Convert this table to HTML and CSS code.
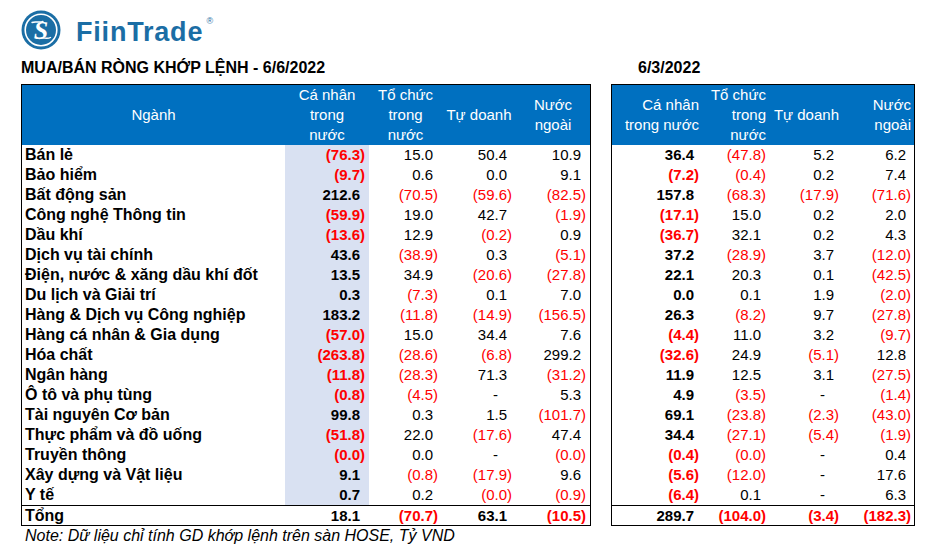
FILE: index.html
```html
<!DOCTYPE html>
<html lang="vi">
<head>
<meta charset="utf-8">
<title>FiinTrade - Mua/bán ròng khớp lệnh</title>
<link rel="stylesheet" href="styles.css">
</head>
<body>
<div class="page">
  <header class="brand">
    <svg class="logo" viewBox="0 0 40 40" aria-hidden="true">
      <circle cx="20" cy="20" r="19.5" fill="#1b6ea5"/>
      <circle cx="20" cy="20" r="15.8" fill="none" stroke="#fff" stroke-width="1.6"/>
      <text x="20" y="29" text-anchor="middle" class="logo-s">S</text>
      <path d="M11 12.5 C14 11 18 13 22 11.5" fill="none" stroke="#fff" stroke-width="1.4" stroke-linecap="round"/>
      <path d="M18 28.5 C22 27 26 29.5 29.5 27.5" fill="none" stroke="#fff" stroke-width="1.4" stroke-linecap="round"/>
    </svg>
    <span class="brand-name">FiinTrade<span class="reg">®</span></span>
  </header>

  <div class="tables">
    <section class="panel panel-left">
      <h1 class="title">MUA/BÁN RÒNG KHỚP LỆNH - 6/6/2022</h1>
      <table class="grid grid-left">
        <colgroup>
          <col class="c-name"><col class="c-84"><col class="c-73"><col class="c-74"><col class="c-74">
        </colgroup>
        <thead>
          <tr>
            <th>Ngành</th>
            <th>Cá nhân<br>trong<br>nước</th>
            <th>Tổ chức<br>trong<br>nước</th>
            <th>Tự doanh</th>
            <th>Nước<br>ngoài</th>
          </tr>
        </thead>
        <tbody>
          <tr><td class="name">Bán lẻ</td><td class="shade b neg">(76.3)</td><td class="pos">15.0</td><td class="pos">50.4</td><td class="pos">10.9</td></tr>
          <tr><td class="name">Bảo hiểm</td><td class="shade b neg">(9.7)</td><td class="pos">0.6</td><td class="pos">0.0</td><td class="pos">9.1</td></tr>
          <tr><td class="name">Bất động sản</td><td class="shade b pos">212.6</td><td class="neg">(70.5)</td><td class="neg">(59.6)</td><td class="neg">(82.5)</td></tr>
          <tr><td class="name">Công nghệ Thông tin</td><td class="shade b neg">(59.9)</td><td class="pos">19.0</td><td class="pos">42.7</td><td class="neg">(1.9)</td></tr>
          <tr><td class="name">Dầu khí</td><td class="shade b neg">(13.6)</td><td class="pos">12.9</td><td class="neg">(0.2)</td><td class="pos">0.9</td></tr>
          <tr><td class="name">Dịch vụ tài chính</td><td class="shade b pos">43.6</td><td class="neg">(38.9)</td><td class="pos">0.3</td><td class="neg">(5.1)</td></tr>
          <tr><td class="name">Điện, nước &amp; xăng dầu khí đốt</td><td class="shade b pos">13.5</td><td class="pos">34.9</td><td class="neg">(20.6)</td><td class="neg">(27.8)</td></tr>
          <tr><td class="name">Du lịch và Giải trí</td><td class="shade b pos">0.3</td><td class="neg">(7.3)</td><td class="pos">0.1</td><td class="pos">7.0</td></tr>
          <tr><td class="name">Hàng &amp; Dịch vụ Công nghiệp</td><td class="shade b pos">183.2</td><td class="neg">(11.8)</td><td class="neg">(14.9)</td><td class="neg">(156.5)</td></tr>
          <tr><td class="name">Hàng cá nhân &amp; Gia dụng</td><td class="shade b neg">(57.0)</td><td class="pos">15.0</td><td class="pos">34.4</td><td class="pos">7.6</td></tr>
          <tr><td class="name">Hóa chất</td><td class="shade b neg">(263.8)</td><td class="neg">(28.6)</td><td class="neg">(6.8)</td><td class="pos">299.2</td></tr>
          <tr><td class="name">Ngân hàng</td><td class="shade b neg">(11.8)</td><td class="neg">(28.3)</td><td class="pos">71.3</td><td class="neg">(31.2)</td></tr>
          <tr><td class="name">Ô tô và phụ tùng</td><td class="shade b neg">(0.8)</td><td class="neg">(4.5)</td><td class="dash">-</td><td class="pos">5.3</td></tr>
          <tr><td class="name">Tài nguyên Cơ bản</td><td class="shade b pos">99.8</td><td class="pos">0.3</td><td class="pos">1.5</td><td class="neg">(101.7)</td></tr>
          <tr><td class="name">Thực phẩm và đồ uống</td><td class="shade b neg">(51.8)</td><td class="pos">22.0</td><td class="neg">(17.6)</td><td class="pos">47.4</td></tr>
          <tr><td class="name">Truyền thông</td><td class="shade b neg">(0.0)</td><td class="pos">0.0</td><td class="dash">-</td><td class="neg">(0.0)</td></tr>
          <tr><td class="name">Xây dựng và Vật liệu</td><td class="shade b pos">9.1</td><td class="neg">(0.8)</td><td class="neg">(17.9)</td><td class="pos">9.6</td></tr>
          <tr><td class="name">Y tế</td><td class="shade b pos">0.7</td><td class="pos">0.2</td><td class="neg">(0.0)</td><td class="neg">(0.9)</td></tr>
          <tr class="total"><td class="name">Tổng</td><td class="pos">18.1</td><td class="neg">(70.7)</td><td class="pos">63.1</td><td class="neg">(10.5)</td></tr>
        </tbody>
      </table>
      <p class="note">Note: Dữ liệu chỉ tính GD khớp lệnh trên sàn HOSE, Tỷ VND</p>
    </section>

    <section class="panel panel-right">
      <h2 class="title date">6/3/2022</h2>
      <table class="grid grid-right">
        <colgroup>
          <col class="c-91"><col class="c-67"><col class="c-73"><col class="c-71">
        </colgroup>
        <thead>
          <tr>
            <th>Cá nhân<br>trong nước</th>
            <th>Tổ chức<br>trong<br>nước</th>
            <th>Tự doanh</th>
            <th>Nước<br>ngoài</th>
          </tr>
        </thead>
        <tbody>
          <tr><td class="b pos">36.4</td><td class="neg">(47.8)</td><td class="pos">5.2</td><td class="pos">6.2</td></tr>
          <tr><td class="b neg">(7.2)</td><td class="neg">(0.4)</td><td class="pos">0.2</td><td class="pos">7.4</td></tr>
          <tr><td class="b pos">157.8</td><td class="neg">(68.3)</td><td class="neg">(17.9)</td><td class="neg">(71.6)</td></tr>
          <tr><td class="b neg">(17.1)</td><td class="pos">15.0</td><td class="pos">0.2</td><td class="pos">2.0</td></tr>
          <tr><td class="b neg">(36.7)</td><td class="pos">32.1</td><td class="pos">0.2</td><td class="pos">4.3</td></tr>
          <tr><td class="b pos">37.2</td><td class="neg">(28.9)</td><td class="pos">3.7</td><td class="neg">(12.0)</td></tr>
          <tr><td class="b pos">22.1</td><td class="pos">20.3</td><td class="pos">0.1</td><td class="neg">(42.5)</td></tr>
          <tr><td class="b pos">0.0</td><td class="pos">0.1</td><td class="pos">1.9</td><td class="neg">(2.0)</td></tr>
          <tr><td class="b pos">26.3</td><td class="neg">(8.2)</td><td class="pos">9.7</td><td class="neg">(27.8)</td></tr>
          <tr><td class="b neg">(4.4)</td><td class="pos">11.0</td><td class="pos">3.2</td><td class="neg">(9.7)</td></tr>
          <tr><td class="b neg">(32.6)</td><td class="pos">24.9</td><td class="neg">(5.1)</td><td class="pos">12.8</td></tr>
          <tr><td class="b pos">11.9</td><td class="pos">12.5</td><td class="pos">3.1</td><td class="neg">(27.5)</td></tr>
          <tr><td class="b pos">4.9</td><td class="neg">(3.5)</td><td class="dash">-</td><td class="neg">(1.4)</td></tr>
          <tr><td class="b pos">69.1</td><td class="neg">(23.8)</td><td class="neg">(2.3)</td><td class="neg">(43.0)</td></tr>
          <tr><td class="b pos">34.4</td><td class="neg">(27.1)</td><td class="neg">(5.4)</td><td class="neg">(1.9)</td></tr>
          <tr><td class="b neg">(0.4)</td><td class="neg">(0.0)</td><td class="dash">-</td><td class="pos">0.4</td></tr>
          <tr><td class="b neg">(5.6)</td><td class="neg">(12.0)</td><td class="dash">-</td><td class="pos">17.6</td></tr>
          <tr><td class="b neg">(6.4)</td><td class="pos">0.1</td><td class="dash">-</td><td class="pos">6.3</td></tr>
          <tr class="total"><td class="pos">289.7</td><td class="neg">(104.0)</td><td class="neg">(3.4)</td><td class="neg">(182.3)</td></tr>
        </tbody>
      </table>
    </section>
  </div>
</div>
</body>
</html>
```

FILE: styles.css
```css
html, body {
  margin: 0;
  background: #ffffff;
}

body {
  font-family: "Liberation Sans", Arial, sans-serif;
  color: #000000;
}

.page {
  padding: 10px 0 0 21px;
}

/* Brand */
.brand {
  display: flex;
  align-items: center;
  gap: 15px;
  height: 40px;
}

.logo {
  width: 40px;
  height: 40px;
  flex: none;
}

.logo-s {
  fill: #ffffff;
  font-family: "Liberation Serif", "DejaVu Serif", serif;
  font-weight: bold;
  font-style: italic;
  font-size: 26px;
}

.brand-name {
  position: relative;
  padding-top: 4px;
  font-size: 27px;
  font-weight: bold;
  letter-spacing: 0.8px;
  color: #1b6ea5;
}

.reg {
  position: absolute;
  top: 3px;
  right: -10px;
  font-size: 9px;
  letter-spacing: 0;
  font-weight: normal;
}

/* Panels */
.tables {
  display: flex;
  align-items: flex-start;
  gap: 20px;
}

.title {
  margin: 8px 0 6px;
  font-size: 16px;
  line-height: 20px;
  font-weight: bold;
}

.date {
  padding-left: 27px;
}

/* Tables */
.grid {
  border: 1px solid #000000;
  border-spacing: 0;
  table-layout: fixed;
}

.grid-left { width: 570px; }
.grid-right { width: 304px; }

.c-name { width: 263px; }
.c-84 { width: 84px; }
.c-73 { width: 73px; }
.c-74 { width: 74px; }
.c-91 { width: 91px; }
.c-67 { width: 67px; }
.c-71 { width: 71px; }

.grid th {
  height: 60px;
  padding: 0;
  background: #0070c0;
  color: #ffffff;
  font-weight: normal;
  font-size: 15px;
  line-height: 20px;
  text-align: center;
  vertical-align: middle;
  white-space: nowrap;
}

.grid-right th {
  text-align: right;
  padding-right: 4px;
}

.grid-right th:last-child {
  padding-right: 3px;
}

.grid td {
  height: 20px;
  padding: 0 4px;
  font-size: 15px;
  line-height: 20px;
  text-align: right;
  white-space: nowrap;
  vertical-align: middle;
}

.grid-right td:last-child {
  padding-right: 3px;
}

.grid td.name {
  padding-left: 3px;
  text-align: left;
  font-size: 16px;
  font-weight: bold;
}

.b { font-weight: bold; }
.neg { color: #ff0000; }
.grid td.pos { padding-right: 9px; }
.grid-right td.pos:last-child { padding-right: 8px; }
.grid td.dash { padding-right: 18px; }
.shade { background: #d9e1f2; }

.grid tr.total td {
  height: 19px;
  line-height: 19px;
  border-top: 1px solid #000000;
  font-weight: bold;
}

.note {
  margin: 0;
  padding-left: 4px;
  font-size: 16px;
  line-height: 20px;
  font-style: italic;
}
```
